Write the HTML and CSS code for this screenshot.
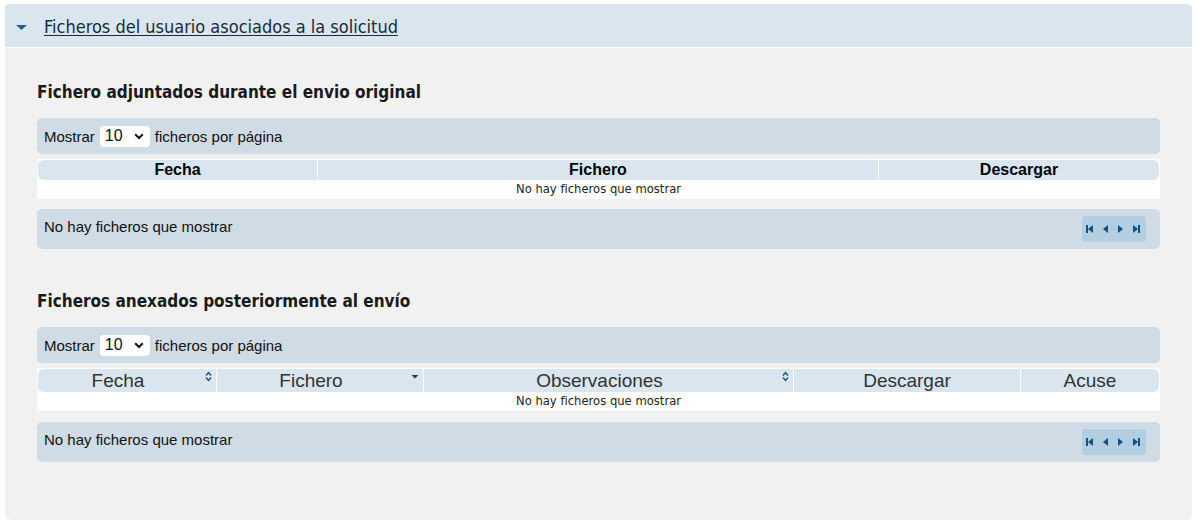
FILE: index.html
```html
<!DOCTYPE html>
<html lang="es">
<head>
<meta charset="utf-8">
<title>Ficheros</title>
<link rel="stylesheet" href="styles.css">
</head>
<body>
<div class="panel">
  <div class="panel-head">
    <svg class="caret" width="11" height="5" viewBox="0 0 11 5"><path d="M0 0h11L5.5 5z" fill="#2b5f8b"/></svg>
    <a class="panel-title" href="#">Ficheros del usuario asociados a la solicitud</a>
  </div>
  <div class="panel-body">
    <section class="block">
      <h2 class="block-title">Fichero adjuntados durante el envio original</h2>
      <div class="toolbar">
        <label class="length">Mostrar
          <span class="select"><span class="sel-val">10</span><svg class="chev" width="10" height="7" viewBox="0 0 10 7"><path d="M1.2 1.2L5 5l3.8-3.8" fill="none" stroke="#111" stroke-width="2"/></svg></span>
          ficheros por página</label>
      </div>
      <div class="table t1">
        <div class="thead">
          <div class="th c-fecha1">Fecha</div>
          <div class="th c-fich1">Fichero</div>
          <div class="th c-desc1">Descargar</div>
        </div>
        <div class="tbody">No hay ficheros que mostrar</div>
      </div>
      <div class="footer">
        <span class="info">No hay ficheros que mostrar</span>
        <div class="pager">
          <svg width="56" height="10" viewBox="0 0 56 10">
            <g fill="#0f5283">
              <rect x="0" y="1" width="2" height="8"/><path d="M7 1v8L2 5z"/>
              <path d="M22 1v8l-5-4z"/>
              <path d="M32 1v8l5-4z"/>
              <path d="M47 1v8l5-4z"/><rect x="52" y="1" width="2" height="8"/>
            </g>
          </svg>
        </div>
      </div>
    </section>

    <section class="block second">
      <h2 class="block-title">Ficheros anexados posteriormente al envío</h2>
      <div class="toolbar">
        <label class="length">Mostrar
          <span class="select"><span class="sel-val">10</span><svg class="chev" width="10" height="7" viewBox="0 0 10 7"><path d="M1.2 1.2L5 5l3.8-3.8" fill="none" stroke="#111" stroke-width="2"/></svg></span>
          ficheros por página</label>
      </div>
      <div class="table t2">
        <div class="thead">
          <div class="th sortable c-fecha2">Fecha<svg class="sort" width="7" height="11" viewBox="0 0 7 11"><path d="M1 4.5l2.5-3 2.5 3M1 6.5l2.5 3 2.5-3" fill="none" stroke="#1c4f7a" stroke-width="1.3"/></svg></div>
          <div class="th sortable c-fich2">Fichero<svg class="sort" width="8" height="11" viewBox="0 0 8 11"><path d="M0.5 4h7L4 7.5z" fill="#1c3f5e"/></svg></div>
          <div class="th sortable c-obs2">Observaciones<svg class="sort" width="7" height="11" viewBox="0 0 7 11"><path d="M1 4.5l2.5-3 2.5 3M1 6.5l2.5 3 2.5-3" fill="none" stroke="#1c4f7a" stroke-width="1.3"/></svg></div>
          <div class="th c-desc2">Descargar</div>
          <div class="th c-acuse2">Acuse</div>
        </div>
        <div class="tbody">No hay ficheros que mostrar</div>
      </div>
      <div class="footer f2">
        <span class="info">No hay ficheros que mostrar</span>
        <div class="pager">
          <svg width="56" height="10" viewBox="0 0 56 10">
            <g fill="#0f5283">
              <rect x="0" y="1" width="2" height="8"/><path d="M7 1v8L2 5z"/>
              <path d="M22 1v8l-5-4z"/>
              <path d="M32 1v8l5-4z"/>
              <path d="M47 1v8l5-4z"/><rect x="52" y="1" width="2" height="8"/>
            </g>
          </svg>
        </div>
      </div>
    </section>
  </div>
</div>
</body>
</html>
```

FILE: styles.css
```css
* { box-sizing: border-box; }
body {
  margin: 0;
  background: #fff;
  font-family: "Liberation Sans", Arial, sans-serif;
  color: #111;
}
.panel {
  margin: 4px 5px 0 5px;
  width: 1187px;
  border-radius: 4px;
  overflow: hidden;
}
.panel-head {
  height: 44px;
  background: #d9e6f0;
  border-bottom: 1px solid #fff;
  display: flex;
  align-items: center;
  padding-left: 11px;
}
.caret { margin-right: 17px; margin-top: 4px; }
.panel-title {
  font-family: "DejaVu Sans Condensed", "DejaVu Sans", sans-serif;
  font-size: 18px;
  color: #1d2b38;
  text-decoration: underline;
  text-underline-offset: 2px;
  margin-top: 1px;
}
.panel-body {
  background: #f1f1f1;
  padding: 34px 32px 57px 32px;
  border-radius: 0 0 6px 6px;
  height: 472px;
}
.block-title {
  margin: 0 0 16px 0;
  height: 20px;
  line-height: 20px;
  font-family: "DejaVu Sans Condensed", "DejaVu Sans", sans-serif;
  font-weight: bold;
  font-size: 17px;
  color: #1a1a1a;
}
.second { margin-top: 42px; }
.toolbar {
  height: 36px;
  background: #cfdce5;
  border-radius: 5px;
  display: flex;
  align-items: center;
  padding-left: 7px;
  font-size: 15px;
  color: #111;
}
.length { display: flex; align-items: center; }
.select {
  width: 50px;
  height: 21px;
  background: #fff;
  border-radius: 4px;
  margin: 0 5px 0 5px;
  display: inline-flex;
  align-items: center;
  justify-content: space-between;
  padding: 0 6px 0 5px;
  font-size: 16px;
}
.table {
  margin-top: 5px;
  background: #fff;
  padding: 1px 1px 1px 1px;
}
.thead {
  display: flex;
  background: #d9e6f0;
  border-radius: 6px;
}
.th {
  position: relative;
  text-align: center;
  border-right: 1px solid #fff;
}
.th:last-child { border-right: 0; }
.t1 .thead { height: 20px; }
.t1 .th { font-weight: bold; font-size: 16px; line-height: 20px; color: #000; }
.c-fecha1 { width: 280px; }
.c-fich1 { width: 561px; }
.c-desc1 { flex: 1; }
.t2 .thead { height: 23px; }
.t2 .th { font-size: 19px; line-height: 23px; color: #333; }
.t2 .sortable { padding-right: 18px; }
.c-fecha2 { width: 179px; }
.c-fich2 { width: 207px; }
.c-obs2 { width: 370px; }
.c-desc2 { width: 227px; }
.c-acuse2 { flex: 1; }
.sort { position: absolute; right: 4px; top: 2px; }
.tbody {
  height: 18px;
  line-height: 18px;
  text-align: center;
  font-family: "DejaVu Sans", Verdana, sans-serif;
  font-size: 11.6px;
  color: #222;
}
.footer {
  margin-top: 10px;
  height: 40px;
  background: #cfdce5;
  border-radius: 5px;
  display: flex;
  justify-content: space-between;
  align-items: flex-start;
  padding: 9px 14px 0 7px;
  font-size: 15px;
  color: #111;
}
.f2 { margin-top: 11px; }
.info { line-height: 18px; }
.pager {
  width: 64px;
  height: 26px;
  margin-top: -2px;
  background: #b3cee0;
  border-radius: 4px;
  display: flex;
  align-items: center;
  justify-content: center;
}
```
